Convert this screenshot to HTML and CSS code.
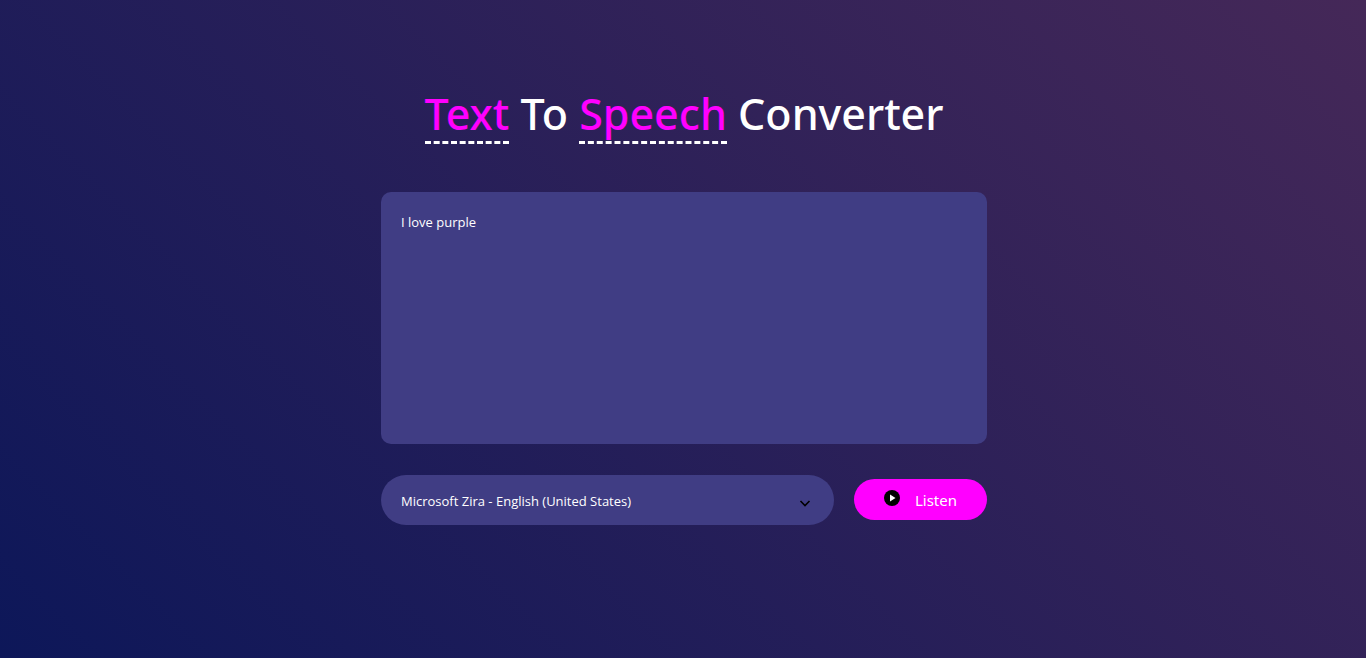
FILE: index.html
```html
<!DOCTYPE html>
<html lang="en">
<head>
<meta charset="utf-8">
<meta name="viewport" content="width=device-width, initial-scale=1">
<title>Text To Speech Converter</title>
<link rel="stylesheet" href="styles.css">
</head>
<body>
<main class="hero">
  <h1 class="title"><span class="accent">Text</span> To <span class="accent">Speech</span> Converter</h1>
  <form class="converter">
    <textarea class="message" aria-label="Text to speak" placeholder="Write anything here...">I love purple</textarea>
    <div class="row">
      <select class="voice" aria-label="Voice">
        <option>Microsoft Zira - English (United States)</option>
      </select>
      <button class="listen" type="button">
        <svg class="play" viewBox="0 0 16 16" aria-hidden="true"><circle cx="8" cy="8" r="8"/><path d="M6 4.5v7L11.5 8z" fill="#fff"/></svg>
        Listen
      </button>
    </div>
  </form>
</main>
</body>
</html>
```
FILE: styles.css
```css
* {
  box-sizing: border-box;
  margin: 0;
  padding: 0;
  font-family: "Segoe UI", "Noto Sans", "Open Sans", sans-serif;
}

body {
  min-height: 100vh;
  display: flex;
  background: #fff;
}

.hero {
  flex: 1;
  display: flex;
  flex-direction: column;
  align-items: center;
  justify-content: center;
  margin-bottom: 1px;
  padding: 0 16px 50px 18px;
  color: #fff;
  background: linear-gradient(45deg, #0d1759, #452858);
}

.title {
  margin-bottom: 48px;
  font-size: 43px;
  font-weight: 500;
  line-height: 60px;
  text-align: center;
}

.accent {
  display: inline-block;
  color: #ff00ff;
  line-height: 54px;
  border-bottom: 3px dashed #fff;
}

.converter {
  width: 100%;
  max-width: 606px;
}

.message {
  display: block;
  width: 100%;
  height: 252px;
  margin-bottom: 31px;
  padding: 20px;
  border: 0;
  border-radius: 10px;
  outline: 0;
  resize: none;
  color: #fff;
  background: #403d84;
  font-family: "Segoe UI", "Open Sans", sans-serif;
  font-size: 13px;
  line-height: 20px;
}

.row {
  display: flex;
  align-items: center;
  gap: 20px;
}

.voice {
  flex: 1;
  min-width: 0;
  height: 50px;
  padding: 2px 20px 0;
  border: 0;
  border-radius: 25px;
  outline: 0;
  appearance: none;
  color: #fff;
  background: #403d84 url("data:image/svg+xml,%3Csvg xmlns='http://www.w3.org/2000/svg' width='12' height='7'%3E%3Cpath d='M1.5 1l4.5 4.5L10.5 1' fill='none' stroke='%23000' stroke-width='1.6'/%3E%3C/svg%3E") no-repeat right 23px top 25px;
  font-family: "Segoe UI", "Open Sans", sans-serif;
  font-size: 13px;
}

.listen {
  display: flex;
  align-items: center;
  gap: 15px;
  height: 41px;
  padding: 0 30px;
  border: 0;
  border-radius: 21px;
  color: #fff;
  background: #ff00ff;
  font-size: 15px;
  cursor: pointer;
}

.play {
  width: 16px;
  height: 16px;
  margin-bottom: 4px;
}
```
